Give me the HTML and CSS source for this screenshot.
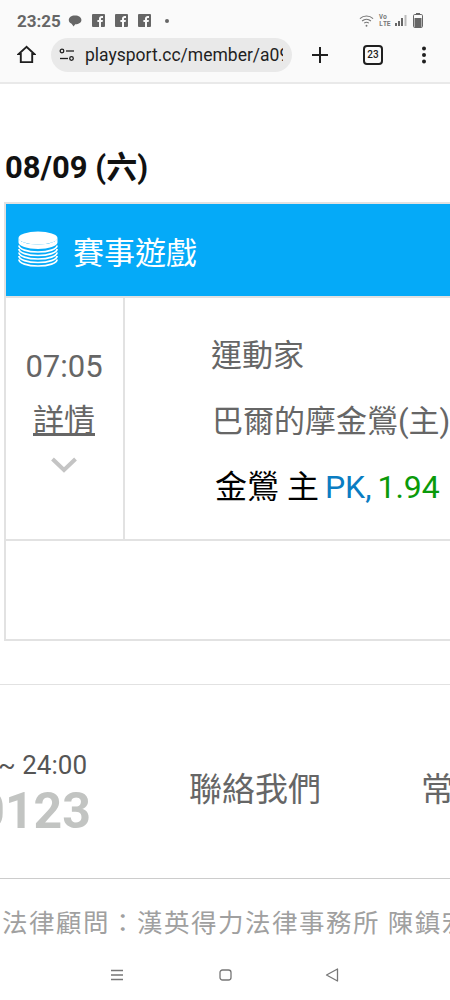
FILE: index.html
```html
<!DOCTYPE html>
<html lang="zh-Hant">
<head>
<meta charset="utf-8">
<title>playsport.cc</title>
<link rel="stylesheet" href="styles.css">
</head>
<body>
<div class="chrome">
  <div class="status">
    <div class="status-left">
      <span class="clock">23:25</span>
      <svg class="ico-chat" viewBox="0 0 14 12"><path d="M7 0.5C3.2 0.5 0.8 2.4 0.8 5c0 1.7 1 3 2.8 3.7L5.6 11.5 7.2 9.3C11 9.3 13.4 7.5 13.4 5 13.4 2.4 10.9 0.5 7 0.5Z" fill="#666"/></svg>
      <svg class="ico-fb" viewBox="0 0 13 13"><rect width="13" height="13" rx="1" fill="#666"/><path d="M9 13V8h1.6l.3-2H9V4.9c0-.6.2-1 1-1h1V2.1C10.700 2 10.200 2 9.700 2 8.200 2 7 2.900 7 4.600V6H5.400v2H7v5Z" fill="#fafafa"/></svg>
      <svg class="ico-fb" viewBox="0 0 13 13"><rect width="13" height="13" rx="1" fill="#666"/><path d="M9 13V8h1.6l.3-2H9V4.9c0-.6.2-1 1-1h1V2.1C10.700 2 10.200 2 9.700 2 8.200 2 7 2.900 7 4.600V6H5.400v2H7v5Z" fill="#fafafa"/></svg>
      <svg class="ico-fb" viewBox="0 0 13 13"><rect width="13" height="13" rx="1" fill="#666"/><path d="M9 13V8h1.6l.3-2H9V4.9c0-.6.2-1 1-1h1V2.1C10.700 2 10.200 2 9.700 2 8.200 2 7 2.900 7 4.600V6H5.400v2H7v5Z" fill="#fafafa"/></svg>
      <span class="dot"></span>
    </div>
    <div class="status-right">
      <svg class="ico-wifi" viewBox="0 0 16 14" fill="none" stroke="#777" stroke-width="1.200"><path d="M1 4.500C5 .8 11 .8 15 4.500"/><path d="M3.300 7C6 4.600 10 4.600 12.700 7"/><path d="M5.500 9.300C7 8.100 9 8.100 10.500 9.300"/><circle cx="8" cy="12" r="1" fill="#777" stroke="none"/></svg>
      <span class="volte"><span>Vo</span><span>LTE</span></span>
      <svg class="ico-signal" viewBox="0 0 13 12"><rect x="0" y="8" width="2" height="3" fill="#666"/><rect x="3" y="6" width="2" height="5" fill="#666"/><rect x="6" y="3" width="2" height="8" fill="#666"/><rect x="9.500" y="0" width="2" height="11" fill="#bbb"/></svg>
      <svg class="ico-batt" viewBox="0 0 10 15"><rect x="3" y="0" width="4" height="2" fill="#666"/><rect x="0.500" y="1.500" width="9" height="13" rx="1.200" fill="#fafafa" stroke="#666"/><rect x="1.500" y="5" width="7" height="9" fill="#666"/></svg>
    </div>
  </div>
  <div class="toolbar">
    <svg class="ico-home" viewBox="0 0 20 20" fill="none" stroke="#1f1f1f" stroke-width="2" stroke-linejoin="miter"><path d="M10 2 1.800 9.500H4V18H16V9.500H18.200Z"/></svg>
    <div class="omnibox">
      <svg class="ico-tune" viewBox="0 0 16 14" fill="none" stroke="#1f1f1f" stroke-width="1.300"><circle cx="3" cy="3" r="1.800"/><path d="M7 3H15"/><path d="M1 10.500H9"/><circle cx="12.500" cy="10.500" r="1.800"/></svg>
      <span class="url">playsport.cc/member/a09825</span>
    </div>
    <svg class="ico-plus" viewBox="0 0 18 18" stroke="#1f1f1f" stroke-width="2"><path d="M9 1V17M1 9H17"/></svg>
    <span class="tabs">23</span>
    <svg class="ico-more" viewBox="0 0 6 18" fill="#1f1f1f"><circle cx="3" cy="2.500" r="2"/><circle cx="3" cy="9" r="2"/><circle cx="3" cy="15.500" r="2"/></svg>
  </div>
</div>

<main class="page">
  <h2 class="date">08/09 (六)</h2>
  <section class="board">
    <header class="board-head">
      <svg class="ico-coins" viewBox="0 0 40 38">
        <ellipse cx="20" cy="7" rx="19.500" ry="6.500" fill="#fff"/>
        <path d="M.5 7v4.500c0 3.500 8.700 6.500 19.500 6.500s19.500-3 19.500-6.500V7c0 3.600-8.700 6.500-19.500 6.500S.5 10.600.5 7Z" fill="#fff"/>
        <g fill="none" stroke="#fff" stroke-width="1.700">
          <path d="M.9 14.500c0 3.600 8.500 6.500 19.100 6.500s19.100-2.900 19.100-6.500"/>
          <path d="M.9 18c0 3.600 8.500 6.500 19.100 6.500s19.100-2.900 19.100-6.500"/>
          <path d="M.9 21.500c0 3.600 8.500 6.500 19.100 6.500s19.100-2.900 19.100-6.500"/>
          <path d="M.9 25c0 3.600 8.500 6.500 19.100 6.500s19.100-2.900 19.100-6.500"/>
          <path d="M.9 28.500c0 3.600 8.500 6.500 19.100 6.500s19.100-2.900 19.100-6.500"/>
        </g>
      </svg>
      <span class="board-title">賽事遊戲</span>
    </header>
    <div class="game">
      <div class="game-time">
        <div class="time">07:05</div>
        <a class="detail" href="#">詳情</a>
        <svg class="ico-chev" viewBox="0 0 26 16" fill="none" stroke="#c4c4c4" stroke-width="4"><path d="M1.500 2 13 13 24.500 2"/></svg>
      </div>
      <div class="game-info">
        <div class="team team-away">運動家</div>
        <div class="team team-home">巴爾的摩金鶯(主)</div>
        <div class="pick"><span class="pick-team">金鶯 主</span> <span class="pick-pk">PK,</span> <span class="pick-odds">1.94</span></div>
      </div>
    </div>
    <div class="game-extra"></div>
  </section>

  <footer class="foot">
    <div class="foot-main">
      <div class="service">
        <div class="hours">~ 24:00</div>
        <div class="phone">0123</div>
      </div>
      <a class="foot-link contact" href="#">聯絡我們</a>
      <a class="foot-link" href="#">常見問題</a>
    </div>
    <div class="legal">法律顧問：漢英得力法律事務所 陳鎮宏律師</div>
  </footer>
</main>

<nav class="sysnav">
  <svg class="ico-nav-menu" viewBox="0 0 14 12" stroke="#777" stroke-width="1.300"><path d="M1 1.500H13M1 6H13M1 10.500H13"/></svg>
  <svg class="ico-nav-home" viewBox="0 0 13 12" fill="none" stroke="#777" stroke-width="1.300"><rect x="1" y="1" width="11" height="10" rx="2.500"/></svg>
  <svg class="ico-nav-back" viewBox="0 0 14 14" fill="none" stroke="#777" stroke-width="1.300" stroke-linejoin="round"><path d="M12.500 1 1.500 7l11 6Z"/></svg>
</nav>
</body>
</html>
```

FILE: styles.css
```css
* { box-sizing: border-box; }
html, body { margin: 0; padding: 0; }
body {
  width: 450px;
  height: 1000px;
  overflow: hidden;
  background: #fff;
  font-family: Roboto, "Noto Sans CJK TC", sans-serif;
  display: flex;
  flex-direction: column;
}
svg { display: block; flex: none; }

/* browser chrome */
.chrome { background: #fafafa; border-bottom: 2px solid #e9e9e9; height: 84px; flex: none; }
.status { height: 33px; display: flex; justify-content: space-between; align-items: center; padding: 8px 27px 0 17px; }
.status-left, .status-right { display: flex; align-items: center; }
.clock { font-size: 17px; font-weight: 700; color: #666; width: 51px; }
.ico-chat { width: 14px; height: 12px; margin-right: 10px; }
.ico-fb { width: 13px; height: 13px; margin-right: 10px; }
.dot { width: 4px; height: 4px; border-radius: 50%; background: #666; margin-left: 4px; }
.ico-wifi { width: 15px; height: 14px; margin-right: 5px; }
.volte { display: flex; flex-direction: column; font: 700 6.500px/7px "Liberation Mono", monospace; color: #777; margin-right: 5px; width: 11px; }
.ico-signal { width: 13px; height: 12px; margin-right: 5px; }
.ico-batt { width: 10px; height: 15px; }
.toolbar { height: 49px; display: flex; align-items: center; padding: 0 0 0 17px; margin-top: -3px; }
.ico-home { width: 19px; height: 19px; margin-right: 15px; }
.omnibox { width: 241px; height: 34px; border-radius: 17px; background: #e9e9e9; display: flex; align-items: center; padding-left: 8px; margin-right: 19px; flex: none; }
.ico-tune { width: 16px; height: 14px; margin-right: 10px; }
.url { font-size: 17.500px; color: #1f1f1f; white-space: nowrap; width: 198px; overflow: hidden; }
.ico-plus { width: 18px; height: 18px; margin-right: 34px; }
.tabs { width: 20px; height: 20px; border: 2px solid #1f1f1f; border-radius: 4px; font-size: 10px; font-weight: 500; color: #1f1f1f; display: flex; align-items: center; justify-content: center; margin-right: 38px; }
.ico-more { width: 6px; height: 18px; }

/* page */
.page { flex: 1; min-height: 0; display: flex; flex-direction: column; padding-top: 65px; }
.date { margin: 0 0 15px 5px; font-size: 31px; line-height: 38px; font-weight: 700; color: #111; white-space: nowrap; }
.board { margin-left: 4px; width: 600px; border: 2px solid #e2e2e2; flex: none; }
.board-head { height: 92px; background: #05aaf8; display: flex; align-items: center; padding-left: 12px; }
.ico-coins { width: 40px; height: 38px; margin-right: 15px; }
.board-title { font-size: 31px; color: #fff; }
.game { display: flex; height: 245px; border-top: 2px solid #e2e2e2; border-bottom: 2px solid #e2e2e2; }
.game-time { width: 119px; border-right: 2px solid #e2e2e2; display: flex; flex-direction: column; align-items: center; padding: 49px 1px 0 0; }
.time { font-size: 31px; line-height: 40px; color: #666; }
.detail { font-size: 31px; line-height: 42px; color: #666; text-decoration: underline; margin-top: 13px; }
.ico-chev { width: 26px; height: 16px; margin-top: 15px; }
.game-info { padding: 36px 0 0 86px; font-size: 31px; white-space: nowrap; }
.team { color: #666; line-height: 44px; }
.team-home { margin-top: 22px; margin-left: 1px; }
.pick { margin-top: 21px; margin-left: 4px; line-height: 44px; font-size: 32px; word-spacing: -2px; }
.pick-team { color: #000; word-spacing: 0; }
.pick-pk { color: #0a7dc2; }
.pick-odds { color: #0a9a0a; }
.game-extra { height: 98px; }

/* footer */
.foot { margin-top: 43px; border-top: 1px solid #e2e2e2; flex: 1; min-height: 0; display: flex; flex-direction: column; }
.foot-main { height: 194px; border-bottom: 1px solid #ccc; display: flex; align-items: flex-start; padding-top: 61px; white-space: nowrap; }
.service { width: 91px; flex: none; display: flex; flex-direction: column; align-items: flex-end; }
.hours { font-size: 26px; line-height: 38px; color: #555; margin-right: 4px; }
.phone { font-size: 50px; line-height: 52px; font-weight: 700; color: #c2c4c2; margin-top: 1px; }
.foot-link { font-size: 33px; line-height: 46px; color: #666; text-decoration: none; margin-top: 21px; }
.contact { margin-left: 98px; margin-right: 100px; }
.legal { font-size: 25.500px; line-height: 38px; letter-spacing: 1.500px; color: #a0a0a0; padding: 25px 0 0 2px; white-space: nowrap; }

/* system nav */
.sysnav { position: absolute; left: 0; right: 0; top: 958px; height: 34px; background: #fff; display: flex; align-items: center; padding-left: 110px; }
.ico-nav-menu { width: 14px; height: 12px; margin-right: 95px; }
.ico-nav-home { width: 13px; height: 12px; margin-right: 93px; }
.ico-nav-back { width: 14px; height: 14px; }
```
